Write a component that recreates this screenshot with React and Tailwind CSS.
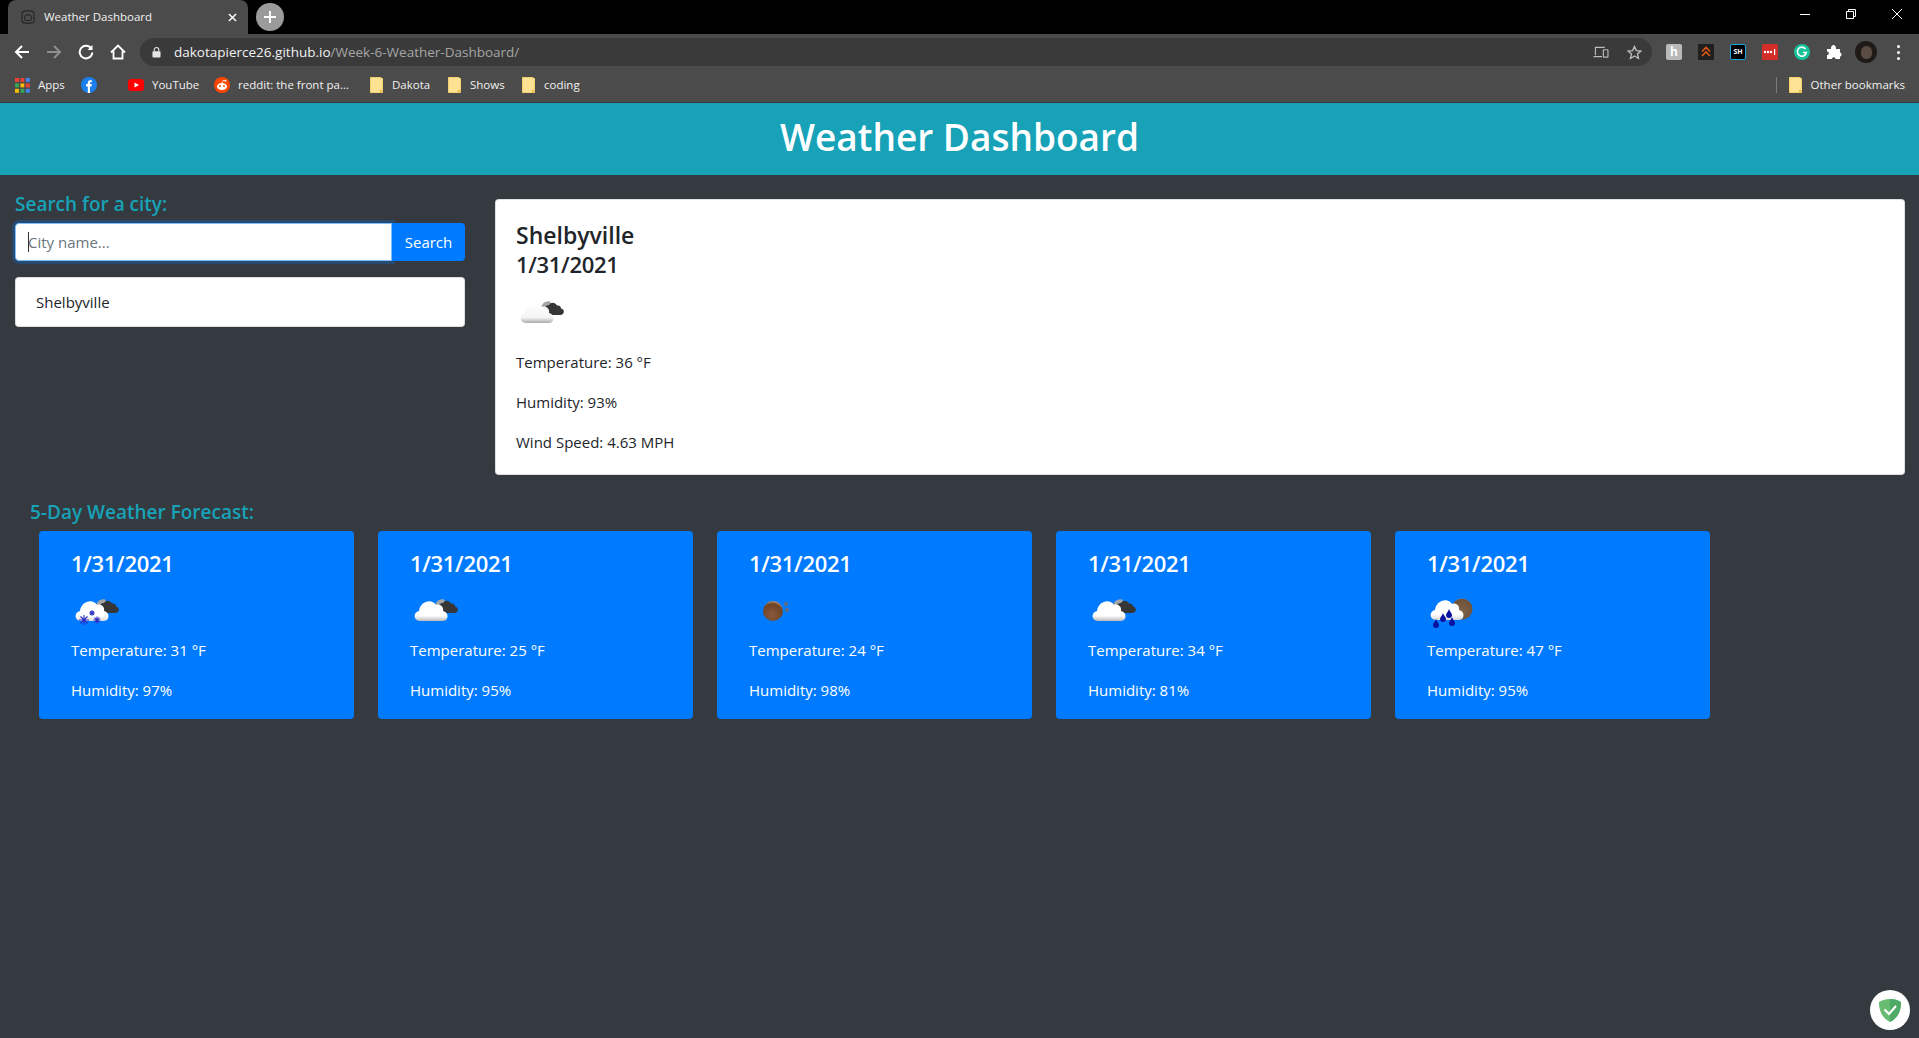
const Cloud = ({ id, shade = "#b9b9b9", mid = "#ffffff", top = "#ffffff" }) => (
  <g>
    <defs>
      <linearGradient id={id} gradientUnits="userSpaceOnUse" x1="0" y1="14" x2="0" y2="33">
        <stop offset="0" stopColor={top} />
        <stop offset="0.72" stopColor={mid} />
        <stop offset="1" stopColor={shade} />
      </linearGradient>
    </defs>
    <path
      d="M10 33 C3 33 3 24 9 23 C10 13 22 10 26 17 C31 15 34 20 33 23 C39 24 39 33 33 33 Z"
      fill={`url(#${id})`}
    />
  </g>
);

const DarkCloud = ({ dx = 0, dy = 0 }) => (
  <g transform={`translate(${dx} ${dy})`}>
    <path d="M25 22 C24 14 29 10.5 34 11.5 L36 15 C32 14 28 16 28 22 Z" fill="#a5a5a5" />
    <path
      d="M31 25 C27 21 28 15 33 15 C35 12 39 12 41 15.5 C44 15 45 17 45 18.5 C49 19 49 25 44 25 Z"
      fill="#363636"
    />
  </g>
);

const Flake = ({ x, y, s }) => (
  <g stroke="#2a2fc4" strokeWidth="1.1" transform={`translate(${x} ${y})`}>
    <path d={`M0 ${-s} V${s} M${-s} 0 H${s} M${-s * 0.7} ${-s * 0.7} L${s * 0.7} ${s * 0.7} M${s * 0.7} ${-s * 0.7} L${-s * 0.7} ${s * 0.7}`} />
  </g>
);

const Drop = ({ x, y }) => (
  <path d={`M${x} ${y - 4} C${x + 1} ${y - 1} ${x + 3} ${y} ${x + 3} ${y + 2} A3 3 0 0 1 ${x - 3} ${y + 2} C${x - 3} ${y} ${x - 1} ${y - 1} ${x} ${y - 4} Z`} fill="#0b129f" />
);

const WeatherIcon = ({ kind, id }) => (
  <svg viewBox="0 0 50 50" className="w-[50px] h-[50px] block">
    {kind === "snow" && (
      <g>
        <DarkCloud />
        <Cloud id={id} shade="#d8d8d8" />
        <Flake x={13} y={32} s={5} />
        <Flake x={21} y={25} s={2.8} />
        <Flake x={26} y={32} s={3.5} />
      </g>
    )}
    {kind === "cloud" && (
      <g>
        <DarkCloud />
        <Cloud id={id} />
      </g>
    )}
    {kind === "grey" && (
      <g transform="translate(0 4)">
        <DarkCloud dx={0} dy={0} />
        <Cloud id={id} shade="#a9a9a9" mid="#f4f4f4" top="#fdfdfd" />
      </g>
    )}
    {kind === "ball" && (
      <g>
        <defs>
          <radialGradient id={id} cx="0.45" cy="0.7" r="0.7">
            <stop offset="0" stopColor="#8a5a3a" />
            <stop offset="0.8" stopColor="#6f4327" />
            <stop offset="1" stopColor="#b89878" />
          </radialGradient>
        </defs>
        <circle cx="24" cy="23" r="10" fill={`url(#${id})`} />
        <circle cx="37" cy="16" r="2" fill="#6a6a78" />
        <circle cx="38" cy="22" r="2" fill="#6a6a78" />
      </g>
    )}
    {kind === "rain" && (
      <g>
        <defs>
          <radialGradient id={`${id}s`} cx="0.5" cy="0.6" r="0.65">
            <stop offset="0" stopColor="#7d6248" />
            <stop offset="0.85" stopColor="#6d5138" />
            <stop offset="1" stopColor="#c2ad96" />
          </radialGradient>
        </defs>
        <circle cx="35" cy="21" r="10.5" fill={`url(#${`${id}s`})`} />
        <g transform="translate(-1 -1)">
          <Cloud id={id} shade="#d5d5d5" />
        </g>
        <Drop x={9} y={35} />
        <Drop x={16} y={29} />
        <Drop x={22} y={25} />
        <Drop x={25} y={33} />
      </g>
    )}
  </svg>
);

const Folder = () => (
  <svg viewBox="0 0 13 16" className="w-[13px] h-[16px] shrink-0 mr-px">
    <path d="M0.5 0.5 H10 L12.5 1.5 V15.5 H0.5 Z" fill="#fde293" stroke="#f4d06f" />
    <path d="M10 13 H12.5 V15.5 H10 Z" fill="#e8bc4c" />
  </svg>
);

const Bookmark = ({ icon, label, className }) => (
  <div className={`flex items-center gap-[8px] text-[11.5px] text-[#f1f1f1] whitespace-nowrap ${className}`}>
    {icon}
    <span>{label}</span>
  </div>
);

const days = [
  { kind: "snow", t: 31, h: 97 },
  { kind: "cloud", t: 25, h: 95 },
  { kind: "ball", t: 24, h: 98 },
  { kind: "cloud", t: 34, h: 81 },
  { kind: "rain", t: 47, h: 95 },
];

export default function App() {
  return (
    <div className="relative min-h-screen overflow-hidden bg-[#343a40] font-['Open_Sans',sans-serif] text-[#212529]">
      {/* Title strip */}
      <div className="h-[34px] bg-black flex items-end pl-[8px] text-white">
        <div className="w-[240px] h-[34px] bg-[#4b4b4b] rounded-t-[8px] flex items-center pl-[13px] pr-[11px]">
          <svg viewBox="0 0 16 16" className="w-[14px] h-[14px] shrink-0" fill="none" stroke="#252525" strokeWidth="1.2">
            <rect x="1" y="1" width="14" height="14" rx="4" />
            <path d="M4 10 C3 7 7 4 10 6 C13 7 13 11 10 12 H6 C5 12 4 11 4 10 Z" />
          </svg>
          <span className="ml-[9px] text-[11.5px] text-[#f1f1f1] whitespace-nowrap">Weather Dashboard</span>
          <svg viewBox="0 0 10 10" className="ml-auto w-[9px] h-[9px]" stroke="#fff" strokeWidth="1.6">
            <path d="M1 1 L9 9 M9 1 L1 9" />
          </svg>
        </div>
        <div className="ml-[8px] mb-[3px] w-[28px] h-[28px] rounded-full bg-[#9b9b9b] flex items-center justify-center">
          <svg viewBox="0 0 12 12" className="w-[12px] h-[12px]" stroke="#fff" strokeWidth="2">
            <path d="M6 0 V12 M0 6 H12" />
          </svg>
        </div>
        <div className="ml-auto self-start h-[28px] flex items-center">
          <div className="w-[46px] flex justify-center">
            <div className="w-[10px] h-px bg-white" />
          </div>
          <div className="w-[46px] flex justify-center">
            <svg viewBox="0 0 10 10" className="w-[10px] h-[10px]" fill="none" stroke="#fff">
              <path d="M0.5 2.5 H7.5 V9.5 H0.5 Z M2.5 2.5 V0.5 H9.5 V7.5 H7.5" />
            </svg>
          </div>
          <div className="w-[45px] flex justify-center">
            <svg viewBox="0 0 10 10" className="w-[10px] h-[10px]" stroke="#fff" strokeWidth="1">
              <path d="M0 0 L10 10 M10 0 L0 10" />
            </svg>
          </div>
        </div>
      </div>

      {/* Toolbar */}
      <div className="h-[34px] bg-[#4b4b4b] flex items-center pt-[2px]">
        <div className="w-[140px] flex items-center shrink-0 pl-[14px] gap-[16px]">
          <svg viewBox="0 0 16 16" className="w-[16px] h-[16px]" fill="none" stroke="#fff" strokeWidth="2">
            <path d="M15 8 H2 M8 2 L2 8 L8 14" />
          </svg>
          <svg viewBox="0 0 16 16" className="w-[16px] h-[16px]" fill="none" stroke="#8f8f8f" strokeWidth="2">
            <path d="M1 8 H14 M8 2 L14 8 L8 14" />
          </svg>
          <svg viewBox="0 0 16 16" className="w-[16px] h-[16px]" fill="none" stroke="#fff" strokeWidth="2">
            <path d="M13.5 5 A6.3 6.3 0 1 0 14.3 8.5" />
            <path d="M14.5 1 V6 H9.5 Z" fill="#fff" stroke="none" />
          </svg>
          <svg viewBox="0 0 16 16" className="w-[16px] h-[16px]" fill="none" stroke="#fff" strokeWidth="1.8">
            <path d="M1 8.5 L8 1.5 L15 8.5 M3.5 7 V14.5 H12.5 V7" />
          </svg>
        </div>
        <div className="w-[1512px] h-[28px] rounded-full bg-[#3a3a3a] flex items-center pl-[12px] pr-[10px] shrink-0">
          <svg viewBox="0 0 10 12" className="w-[9px] h-[11px] shrink-0" fill="#e4e4e4">
            <rect x="0.5" y="4.5" width="9" height="7" rx="1" />
            <path d="M2.5 5 V3 A2.5 2.5 0 0 1 7.5 3 V5" fill="none" stroke="#e4e4e4" strokeWidth="1.2" />
          </svg>
          <span className="ml-[13px] text-[13.5px] whitespace-nowrap text-[#f1f1f1]">
            dakotapierce26.github.io<span className="text-[#a5a5a5]">/Week-6-Weather-Dashboard/</span>
          </span>
          <svg viewBox="0 0 16 14" className="ml-auto w-[16px] h-[13px]" fill="none" stroke="#bdbdbd" strokeWidth="1.2">
            <path d="M2 10 V1.5 H12 M0 11.5 H9" />
            <rect x="10.5" y="4" width="5" height="8" rx="0.8" />
          </svg>
          <svg viewBox="0 0 16 16" className="ml-[18px] w-[15px] h-[15px]" fill="none" stroke="#bdbdbd" strokeWidth="1.4">
            <path d="M8 1.5 L10 6 L14.8 6.4 L11.2 9.6 L12.3 14.4 L8 11.8 L3.7 14.4 L4.8 9.6 L1.2 6.4 L6 6 Z" />
          </svg>
        </div>
        <div className="flex items-center ml-[14px] gap-[16px] shrink-0">
          <div className="w-[16px] h-[16px] rounded-[2px] bg-[#b9b9b9] text-white text-[12px] leading-[16px] text-center font-bold">h</div>
          <svg viewBox="0 0 16 16" className="w-[16px] h-[16px]" fill="none">
            <rect width="16" height="16" fill="#1f1f1f" />
            <path d="M4 7.5 L8 3.5 L12 7.5 M4 12 L8 8 L12 12" stroke="#e25a0c" strokeWidth="1.6" />
          </svg>
          <div className="w-[16px] h-[16px] bg-black border border-[#19a5dc] rounded-[2px] text-white text-[7px] leading-[14px] text-center font-bold">SH</div>
          <svg viewBox="0 0 16 16" className="w-[16px] h-[16px]">
            <rect width="16" height="16" rx="1.5" fill="#d32d27" />
            <circle cx="3" cy="8" r="1.2" fill="#fff" />
            <circle cx="6" cy="8" r="1.2" fill="#fff" />
            <circle cx="9" cy="8" r="1.2" fill="#fff" />
            <rect x="12" y="5" width="1.2" height="6" fill="#fff" />
          </svg>
          <svg viewBox="0 0 16 16" className="w-[16px] h-[16px]" fill="none">
            <circle cx="8" cy="8" r="8" fill="#15c39a" />
            <path d="M11.5 5 A4.5 4.5 0 1 0 12.3 8.5 H9" stroke="#fff" strokeWidth="1.6" />
          </svg>
          <svg viewBox="0 0 16 16" className="w-[16px] h-[16px]" fill="#fff">
            <path d="M1 5 H5 C5 2 6 1 7.5 1 C9 1 10 2 10 5 H14 V8.5 C16 8.5 16 13 14 12.5 V15 H9.5 C9.5 12.5 6 12.5 6 15 H1 V11 C3.5 11 3.5 7.5 1 7.5 Z" />
          </svg>
        </div>
        <div className="ml-[13px] w-[22px] h-[22px] rounded-full bg-[#1d1a18] shrink-0 flex items-center justify-center">
          <div className="w-[11px] h-[13px] rounded-full bg-[#5a4c42]" />
        </div>
        <div className="ml-[20px] flex flex-col gap-[3px] shrink-0">
          <div className="w-[3px] h-[3px] rounded-full bg-white" />
          <div className="w-[3px] h-[3px] rounded-full bg-white" />
          <div className="w-[3px] h-[3px] rounded-full bg-white" />
        </div>
      </div>

      {/* Bookmarks */}
      <div className="h-[35px] bg-[#4b4b4b] border-b border-[#3a3a3a] flex items-center pl-[15px] pr-[14px]">
        <Bookmark
          className="w-[66px]"
          label="Apps"
          icon={
            <svg viewBox="0 0 13 13" className="w-[15px] h-[15px] shrink-0">
              {[0, 1, 2].flatMap((r) =>
                [0, 1, 2].map((c) => (
                  <rect key={`${r}${c}`} x={c * 4.7} y={r * 4.7} width="3.4" height="3.4" fill={["#ea4335", "#ea4335", "#4285f4", "#34a853", "#fbbc05", "#ea4335", "#fbbc05", "#34a853", "#4285f4"][r * 3 + c]} />
                ))
              )}
            </svg>
          }
        />
        <div className="w-[47px]">
          <svg viewBox="0 0 16 16" className="w-[16px] h-[16px]">
            <circle cx="8" cy="8" r="8" fill="#1b7ff0" />
            <path d="M6.8 16 V9.5 H5 V7 H6.8 V5.5 C6.8 3.5 8.2 3 10.8 3.2 V5.2 C9.3 5.1 9 5.4 9 6 V7 H10.8 L10.5 9.5 H9 V16 Z" fill="#fff" />
          </svg>
        </div>
        <Bookmark
          className="w-[86px]"
          label="YouTube"
          icon={
            <svg viewBox="0 0 16 16" className="w-[16px] h-[16px] shrink-0">
              <rect y="2" width="16" height="12" rx="3" fill="#f00" />
              <path d="M6.5 5.5 L11 8 L6.5 10.5 Z" fill="#fff" />
            </svg>
          }
        />
        <Bookmark
          className="w-[156px]"
          label="reddit: the front pa..."
          icon={
            <svg viewBox="0 0 16 16" className="w-[16px] h-[16px] shrink-0">
              <circle cx="8" cy="8" r="8" fill="#ff4500" />
              <ellipse cx="8" cy="9.5" rx="5" ry="3.5" fill="#fff" />
              <circle cx="6" cy="9" r="1" fill="#ff4500" />
              <circle cx="10" cy="9" r="1" fill="#ff4500" />
              <circle cx="11.5" cy="3.8" r="1" fill="#fff" />
              <path d="M8 6 L9 3.5 L11.5 3.8" stroke="#fff" strokeWidth="0.7" fill="none" />
            </svg>
          }
        />
        <Bookmark className="w-[78px]" label="Dakota" icon={<Folder />} />
        <Bookmark className="w-[74px]" label="Shows" icon={<Folder />} />
        <Bookmark label="coding" icon={<Folder />} />
        <div className="ml-auto flex items-center">
          <div className="w-px h-[16px] bg-[#7a7a7a] mr-[12px]" />
          <Bookmark label="Other bookmarks" icon={<Folder />} />
        </div>
      </div>

      {/* Header */}
      <header className="h-[72px] bg-[#17a2b8] flex items-center justify-center">
        <h1 className="text-[37px] leading-[48px] font-semibold text-white mb-[4px]">Weather Dashboard</h1>
      </header>

      {/* Top row */}
      <div className="flex pl-[15px] pr-[14px]">
        <div className="w-[450px] pt-[17px] shrink-0">
          <h5 className="text-[19px] leading-[24px] font-semibold text-[#17a2b8] mb-[7px]">Search for a city:</h5>
          <div className="flex h-[38px]">
            <div className="relative flex-1">
              <input
                placeholder="City name..."
                className="w-full h-full bg-white rounded-l-[4px] border border-[#80bdff] px-[12px] text-[15px] text-[#495057] placeholder:text-[#6c757d] outline-none shadow-[0_0_0_3px_rgba(0,123,255,0.25)]"
              />
              <div className="absolute left-[13px] top-[9px] w-px h-[20px] bg-[#333]" />
            </div>
            <button className="w-[73px] bg-[#007bff] text-white text-[15px] rounded-r-[4px]">Search</button>
          </div>
          <div className="mt-[16px] h-[50px] bg-white border border-[rgba(0,0,0,0.125)] rounded-[4px] flex items-center pl-[20px] text-[15px]">
            Shelbyville
          </div>
        </div>
        <div className="ml-[30px] mt-[24px] flex-1 h-[276px] bg-white border border-[rgba(0,0,0,0.125)] rounded-[4px] pt-[21px] pl-[20px]">
          <h4 className="text-[23px] leading-[29px] font-semibold">Shelbyville</h4>
          <h4 className="text-[22px] leading-[28px] font-semibold tracking-[-0.3px]">1/31/2021</h4>
          <div className="mt-[8px]">
            <WeatherIcon kind="grey" id="main" />
          </div>
          <p className="mt-[14px] text-[15px] leading-[24px]">Temperature: 36 °F</p>
          <p className="mt-[16px] text-[15px] leading-[24px]">Humidity: 93%</p>
          <p className="mt-[16px] text-[15px] leading-[24px]">Wind Speed: 4.63 MPH</p>
        </div>
      </div>

      {/* Forecast */}
      <div className="pl-[30px] mt-[25px]">
        <h5 className="text-[19px] leading-[24px] font-semibold text-[#17a2b8] mb-[7px]">5-Day Weather Forecast:</h5>
        <div className="flex gap-[24px] pl-[9px]">
          {days.map((d, i) => (
            <div key={i} className="w-[315px] h-[188px] rounded-[4px] bg-[#007bff] text-white pl-[32px] pt-[18px]">
              <h4 className="text-[22px] leading-[29px] font-semibold tracking-[-0.3px]">1/31/2021</h4>
              <div className="mt-[10px]">
                <WeatherIcon kind={d.kind} id={`f${i}`} />
              </div>
              <p className="text-[15px] leading-[24px]">Temperature: {d.t} °F</p>
              <p className="mt-[16px] text-[15px] leading-[24px]">Humidity: {d.h}%</p>
            </div>
          ))}
        </div>
      </div>

      {/* Adguard badge */}
      <div className="absolute left-[1870px] top-[990px] w-[40px] h-[40px] rounded-full bg-white flex items-center justify-center">
        <svg viewBox="0 0 24 24" className="w-[24px] h-[24px]">
          <path d="M12 1 C8 1 4 2 1 4 C1 12 3 19 12 24 C21 19 23 12 23 4 C20 2 16 1 12 1 Z" fill="#68bc71" />
          <path d="M12 1 C16 1 20 2 23 4 C23 12 21 19 12 24 Z" fill="#4faa68" />
          <path d="M6.5 11.5 L11 16 L18 8" stroke="#fff" strokeWidth="2.2" fill="none" />
        </svg>
      </div>
    </div>
  );
}
